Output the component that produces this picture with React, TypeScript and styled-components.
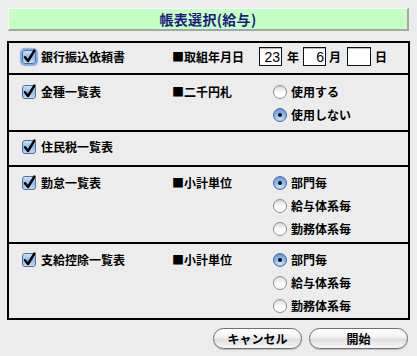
import styled, { createGlobalStyle } from "styled-components";

const GlobalStyle = createGlobalStyle`
    body {
        margin: 0;
        background: #ececec;
        font-family: "Noto Sans CJK JP", "Noto Sans", sans-serif;
        font-size: 12px;
        color: #000;
    }
`

const Window = styled.div`
    width: 417px;
    height: 356px;
    box-sizing: border-box;
    padding-top: 8px;
    background: #ececec;
`

const TitleBar = styled.div`
    margin: 0 8px;
    height: 23px;
    box-sizing: border-box;
    background: #c4ffc4;
    border-top: 1px solid #f8f8f8;
    border-left: 1px solid #f8f8f8;
    border-right: 2px solid #a6a6a6;
    border-bottom: 2px solid #a6a6a6;
    display: flex;
    justify-content: center;
    align-items: center;
    color: #1c1c7e;
    font-size: 14px;
    font-weight: 700;
    letter-spacing: 0.3px;
`

const Panel = styled.div`
    margin: 10px 7px 0 7px;
    border: 2px solid #000;
    display: flex;
    flex-direction: column;
`

const Row = styled.div<{ $h: number; $pt: number }>`
    box-sizing: border-box;
    height: ${(p) => p.$h}px;
    padding-top: ${(p) => p.$pt}px;
    padding-left: 13px;
    display: grid;
    grid-template-columns: 150px 101px 1fr;
    align-items: start;
    & + & {
        border-top: 2px solid #000;
    }
`

const Line = styled.div`
    height: 23px;
    display: flex;
    align-items: center;
`

const CheckLabel = styled(Line)`
    gap: 5px;
    font-weight: 700;
`

const BoxWrap = styled.span<{ $focus?: boolean }>`
    width: 14px;
    height: 14px;
    border-radius: 3px;
    display: inline-flex;
    box-shadow: ${(p) => (p.$focus ? "0 0 1px 2px rgba(95, 150, 225, 0.75)" : "none")};
    svg {
        overflow: visible;
    }
`

const Checkbox = ({ focus }: { focus?: boolean }) => (
    <BoxWrap $focus={focus}>
        <svg width="14" height="14" viewBox="0 0 14 14">
            <defs>
                <linearGradient id="cbg" x1="0" y1="0" x2="0" y2="1">
                    <stop offset="0" stopColor="#d4e6fa" />
                    <stop offset="0.5" stopColor="#8db9ec" />
                    <stop offset="1" stopColor="#c3ddf8" />
                </linearGradient>
            </defs>
            <rect x="0.5" y="0.5" width="13" height="13" rx="2.5" fill="url(#cbg)" stroke="#50709a" />
            <path d="M3 7.2 L6 11 L12.5 0.5" fill="none" stroke="#000" strokeWidth="2.4" strokeLinecap="round" strokeLinejoin="round" />
        </svg>
    </BoxWrap>
)

const SubLabel = styled(Line)`
    font-weight: 700;
`

const DateGroup = styled(Line)`
    grid-column: 2 / 4;
    font-weight: 700;
`

const DateField = styled.div<{ $w: number; $ml: number }>`
    width: ${(p) => p.$w}px;
    height: 19px;
    margin-left: ${(p) => p.$ml}px;
    box-sizing: border-box;
    border: 1px solid #111;
    background: #fff;
    box-shadow: inset 0 1px 0 #bbb;
    display: flex;
    justify-content: flex-end;
    align-items: center;
    padding-right: 1px;
    font-family: "Liberation Sans", sans-serif;
    font-size: 14px;
    font-weight: 400;
`

const Unit = styled.span<{ $ml: number }>`
    margin-left: ${(p) => p.$ml}px;
`

const RadioList = styled.div`
    display: flex;
    flex-direction: column;
`

const RadioItem = styled(Line)`
    gap: 4px;
    font-weight: 700;
`

const RadioDot = styled.span<{ $on?: boolean }>`
    width: 14px;
    height: 14px;
    box-sizing: border-box;
    border-radius: 50%;
    border: 1px solid ${(p) => (p.$on ? "#4f6f9c" : "#8c8c8c")};
    background: ${(p) =>
        p.$on
            ? "radial-gradient(circle at 50% 75%, #d2e8ff 0%, #7fb2ea 55%, #4d86cf 100%)"
            : "linear-gradient(#d9d9d9, #fdfdfd 55%, #ffffff)"};
    display: inline-flex;
    justify-content: center;
    align-items: center;
    &::after {
        content: "";
        width: 4px;
        height: 4px;
        border-radius: 50%;
        background: #000;
        display: ${(p) => (p.$on ? "block" : "none")};
    }
`

const ButtonBar = styled.div`
    display: flex;
    justify-content: flex-end;
    gap: 7px;
    padding-right: 9px;
    margin-top: 8px;
`

const AquaButton = styled.button<{ $w: number }>`
    width: ${(p) => p.$w}px;
    height: 21px;
    border-radius: 11px;
    border: 1px solid #6e6e6e;
    background: linear-gradient(#ffffff 0%, #f1f1f1 45%, #dedede 55%, #f7f7f7 100%);
    box-shadow: 0 1px 1px rgba(0, 0, 0, 0.2);
    font-family: "Noto Sans CJK JP", sans-serif;
    font-size: 12px;
    font-weight: 700;
    color: #000;
    padding: 0;
    display: flex;
    justify-content: center;
    align-items: center;
`

const Radios = ({ items, on }: { items: string[]; on: number }) => (
    <RadioList>
        {items.map((t, i) => (
            <RadioItem key={t}>
                <RadioDot $on={i === on} />
                {t}
            </RadioItem>
        ))}
    </RadioList>
)

const App = () => {
    return (
        <Window>
            <GlobalStyle />
            <TitleBar>帳表選択(給与)</TitleBar>
            <Panel>
                <Row $h={30} $pt={2}>
                    <CheckLabel><Checkbox focus />銀行振込依頼書</CheckLabel>
                    <DateGroup>
                        ■取組年月日
                        <DateField $w={23} $ml={15}>23</DateField>
                        <Unit $ml={5}>年</Unit>
                        <DateField $w={23} $ml={4}>6</DateField>
                        <Unit $ml={3}>月</Unit>
                        <DateField $w={24} $ml={6}></DateField>
                        <Unit $ml={4}>日</Unit>
                    </DateGroup>
                </Row>
                <Row $h={57} $pt={5}>
                    <CheckLabel><Checkbox />金種一覧表</CheckLabel>
                    <SubLabel>■二千円札</SubLabel>
                    <Radios items={["使用する", "使用しない"]} on={1} />
                </Row>
                <Row $h={35} $pt={3}>
                    <CheckLabel><Checkbox />住民税一覧表</CheckLabel>
                </Row>
                <Row $h={77} $pt={4}>
                    <CheckLabel><Checkbox />勤怠一覧表</CheckLabel>
                    <SubLabel>■小計単位</SubLabel>
                    <Radios items={["部門毎", "給与体系毎", "勤務体系毎"]} on={0} />
                </Row>
                <Row $h={76} $pt={4}>
                    <CheckLabel><Checkbox />支給控除一覧表</CheckLabel>
                    <SubLabel>■小計単位</SubLabel>
                    <Radios items={["部門毎", "給与体系毎", "勤務体系毎"]} on={0} />
                </Row>
            </Panel>
            <ButtonBar>
                <AquaButton $w={89}>キャンセル</AquaButton>
                <AquaButton $w={99}>開始</AquaButton>
            </ButtonBar>
        </Window>
    );
}

export default App;
